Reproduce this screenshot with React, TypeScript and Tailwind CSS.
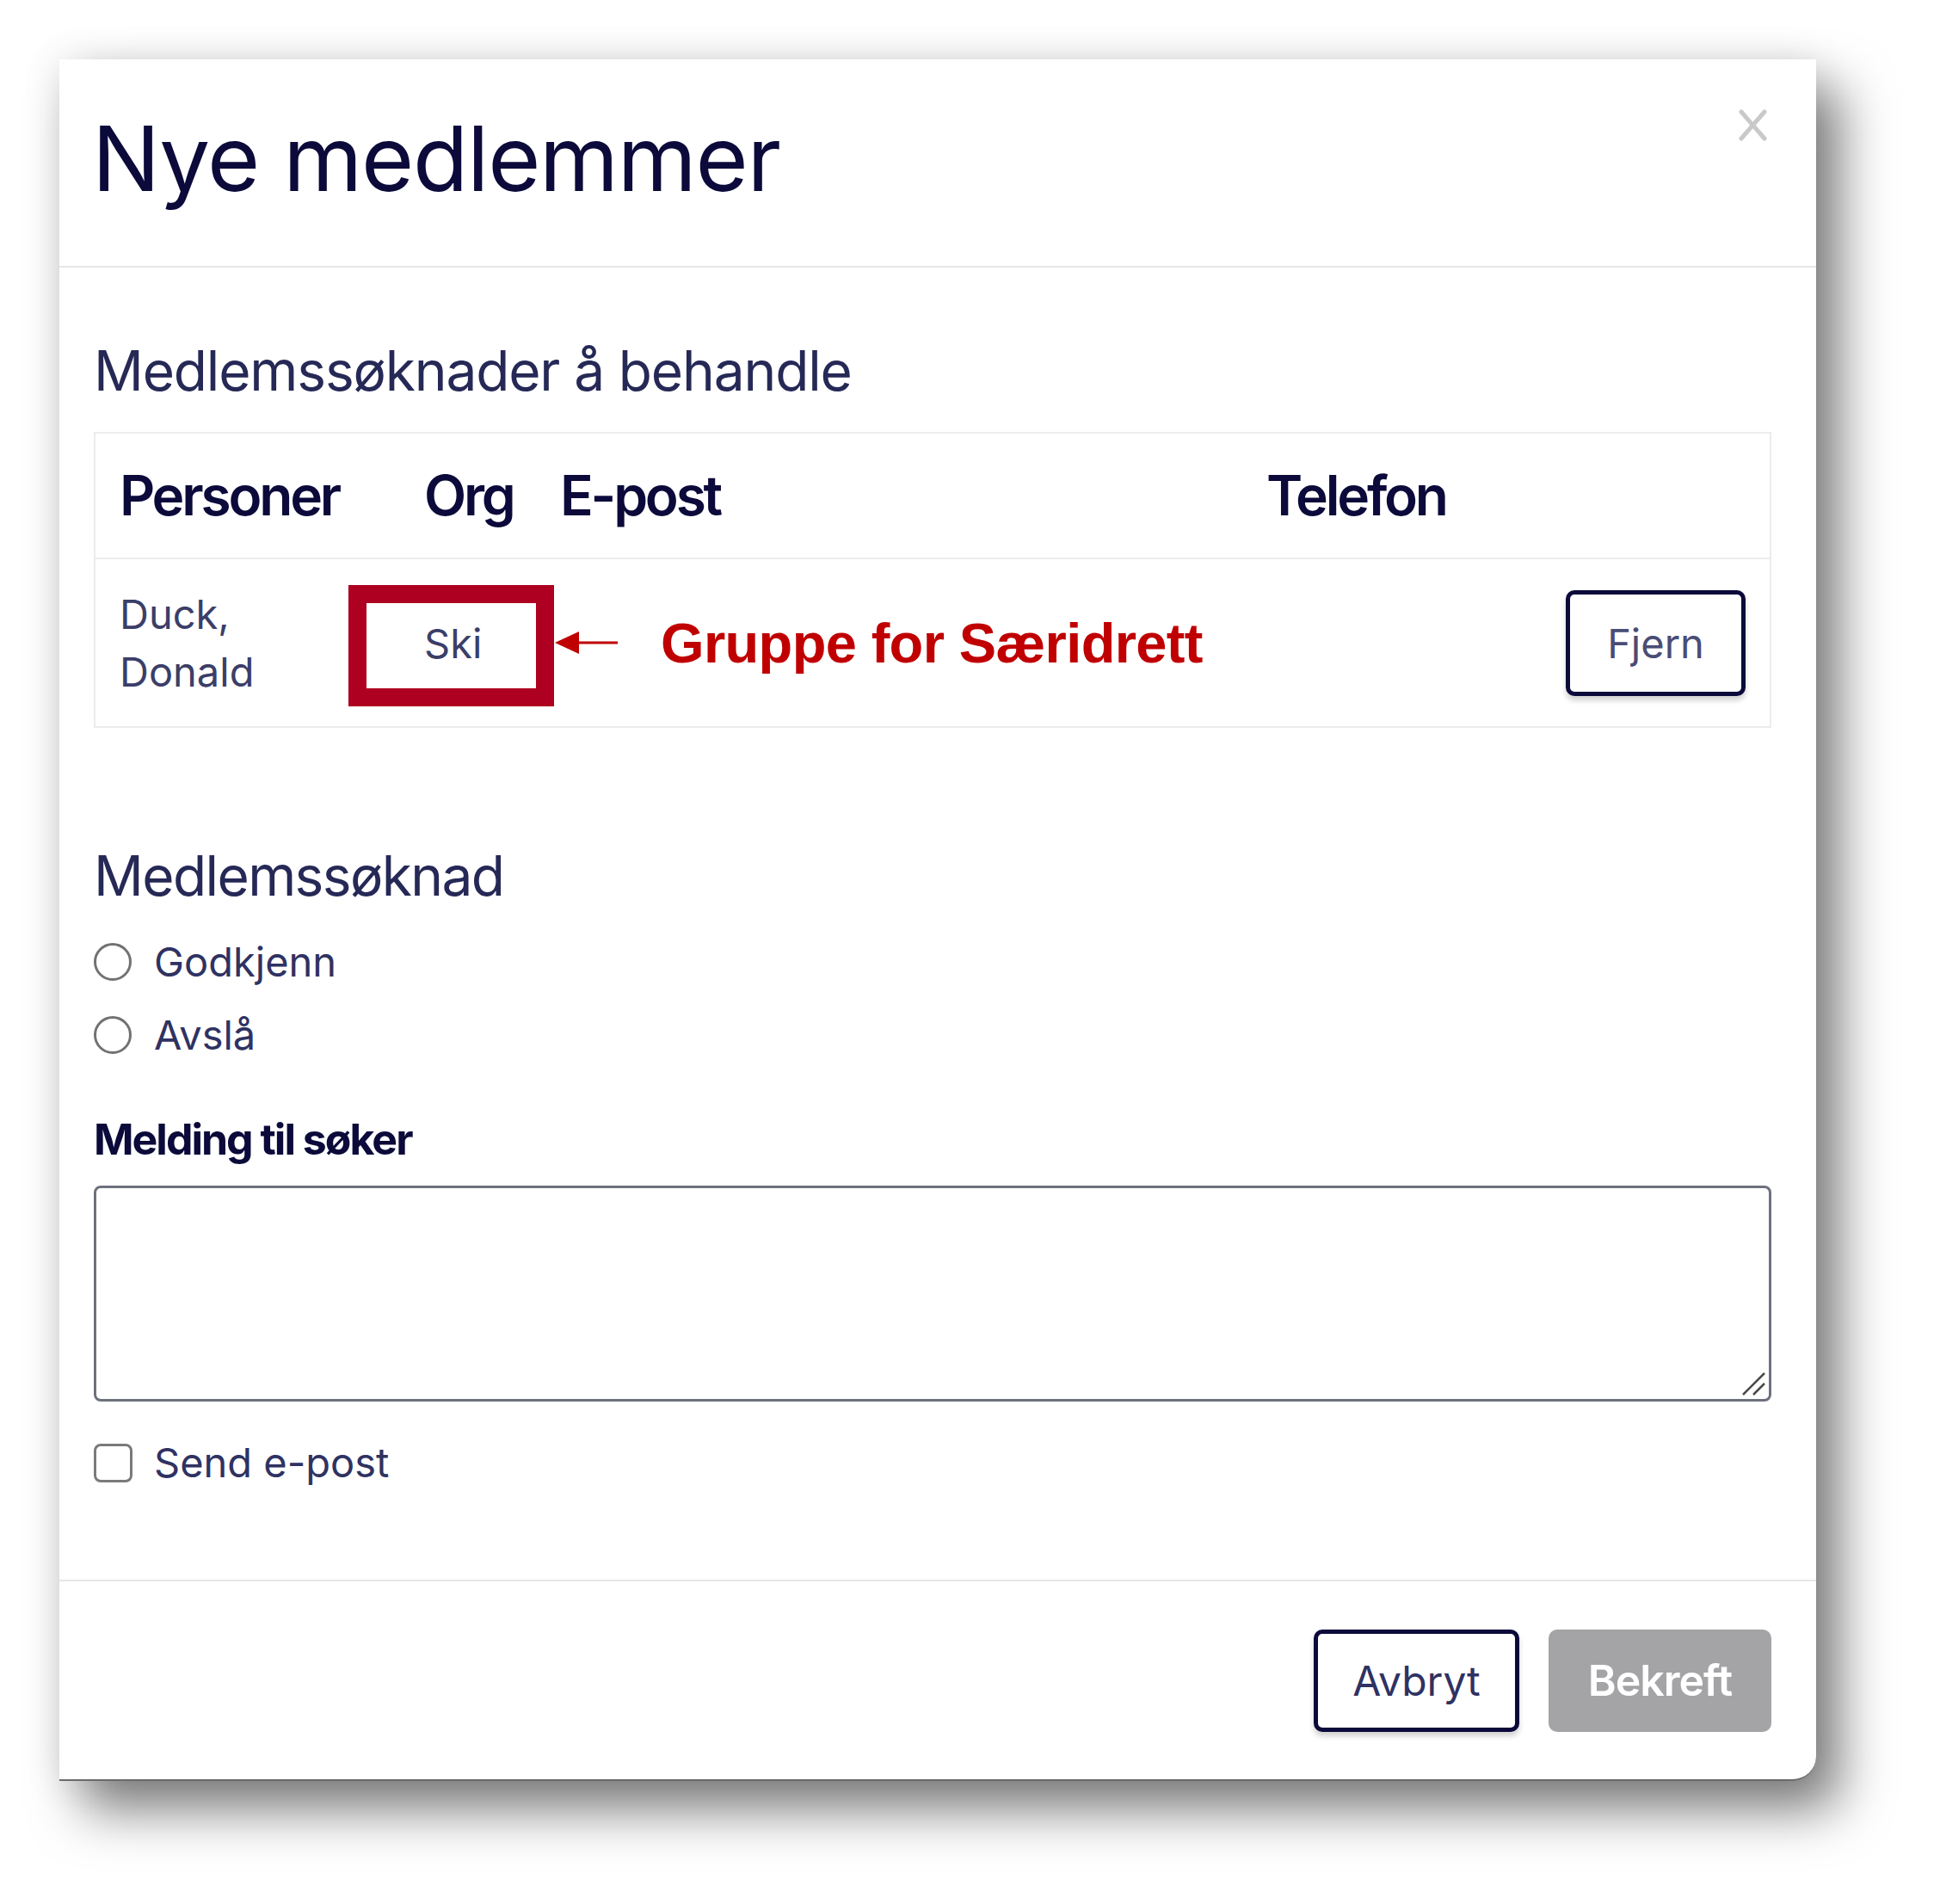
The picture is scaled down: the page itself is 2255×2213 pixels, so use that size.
const ui = { fontFamily: 'Inter, "Noto Sans", sans-serif' }

function CloseIcon() {
  return (
    <svg width="37" height="39" viewBox="0 0 37 39" fill="none">
      <path d="M5 4 L32 35 M32 4 L5 35" stroke="#c9c9c9" strokeWidth="5" strokeLinecap="round" />
    </svg>
  )
}

function Arrow() {
  return (
    <svg width="73" height="28" viewBox="0 0 73 28">
      <line x1="24" y1="14" x2="73" y2="14" stroke="#c00000" strokeWidth="3" />
      <polygon points="0,14 28,1 28,27" fill="#c00000" />
    </svg>
  )
}

function ResizeGrip() {
  return (
    <svg width="30" height="30" viewBox="0 0 30 30" fill="none">
      <path d="M3 28 L28 3 M15 28 L28 15" stroke="#4a4a4a" strokeWidth="2.5" />
    </svg>
  )
}

export default function App() {
  const cols = 'grid grid-cols-[354px_158px_821px_1fr]'

  return (
    <div className="min-h-screen w-full bg-white pl-[69px] pt-[69px]" style={ui}>
      <div className="w-[2042px] rounded-br-[28px] border-b-2 border-[#6a6a6a] bg-white shadow-[28px_34px_60px_rgba(0,0,0,0.5),0_0_45px_rgba(0,0,0,0.1)]">
        {/* header */}
        <div className="flex items-start justify-between border-b-2 border-[#e6e6e6] pb-[73px] pl-[38px] pr-[55px] pt-[62px]">
          <h1 className="text-[105px] font-normal leading-none tracking-[-0.012em] text-[#0b0a3a]">
            Nye medlemmer
          </h1>
          <button className="-mt-[5px]">
            <CloseIcon />
          </button>
        </div>

        {/* body */}
        <div className="pb-[111px] pl-[40px] pr-[52px] pt-[88px]">
          <h2 className="text-[64px] font-normal leading-none tracking-[-0.018em] text-[#262956]">
            Medlemssøknader å behandle
          </h2>

          <div className="mt-[39px] border-2 border-[#ececec]">
            <div className={`${cols} h-[146px] items-center border-b-2 border-[#ececec] text-[64px] font-semibold leading-none tracking-[-0.05em] text-[#0b0a3a]`}>
              <div className="px-[28px]">Personer</div>
              <div className="px-[28px]">Org</div>
              <div className="px-[28px]">E-post</div>
              <div className="px-[28px]">Telefon</div>
            </div>

            <div className={`${cols} relative h-[194px] items-center text-[47px] leading-[67px] text-[#3b3e68]`}>
              <div className="px-[28px]">
                Duck,
                <br />
                Donald
              </div>
              <div className="px-[28px]">Ski</div>
              <div />
              <div className="flex justify-end px-[28px]">
                <button className="h-[123px] w-[209px] rounded-[10px] border-[5px] border-[#0b0a3a] bg-white text-[47px] text-[#4a4d75] shadow-[0_5px_6px_rgba(0,0,0,0.18)]">
                  Fjern
                </button>
              </div>

              {/* annotation */}
              <div className="absolute left-[294px] top-[30px] h-[141px] w-[239px] border-[21px] border-[#ae0020]" />
              <div className="absolute bottom-0 left-[534px] top-0 flex items-center gap-[50px]">
                <Arrow />
                <span
                  className="text-[65px] font-bold leading-none tracking-[-0.01em] text-[#c00000]"
                  style={{ fontFamily: '"Liberation Sans", Arial, sans-serif' }}
                >
                  Gruppe for Særidrett
                </span>
              </div>
            </div>
          </div>

          <h2 className="mt-[140px] text-[64px] font-normal leading-none tracking-[-0.025em] text-[#262956]">
            Medlemssøknad
          </h2>

          <div className="mt-[38px] flex flex-col gap-[25px]">
            {['Godkjenn', 'Avslå'].map((label) => (
              <label key={label} className="flex h-[60px] items-center gap-[26px] text-[47px] text-[#2f3262]">
                <input
                  type="radio"
                  name="soknad"
                  className="h-[44px] w-[44px] appearance-none rounded-full border-[3px] border-[#727272] bg-white"
                />
                {label}
              </label>
            ))}
          </div>

          <div className="mt-[66px] text-[50px] font-bold leading-none tracking-[-0.04em] text-[#0b0a3a]">
            Melding til søker
          </div>
          <div className="relative mt-[29px]">
            <textarea className="block h-[251px] w-full resize-none rounded-[8px] border-[3px] border-[#6d717c] bg-white" />
            <span className="pointer-events-none absolute bottom-[6px] right-[6px]">
              <ResizeGrip />
            </span>
          </div>

          <label className="mt-[46px] flex h-[50px] items-center gap-[25px] text-[47px] text-[#2f3262]">
            <input
              type="checkbox"
              className="h-[45px] w-[45px] appearance-none rounded-[8px] border-[3px] border-[#7a7a7a] bg-white"
            />
            Send e-post
          </label>
        </div>

        {/* footer */}
        <div className="flex justify-end gap-[34px] border-t-2 border-[#e6e6e6] pb-[55px] pr-[52px] pt-[56px]">
          <button className="h-[119px] w-[239px] rounded-[10px] border-[5px] border-[#0b0a3a] bg-white text-[48px] font-normal text-[#2f3262] shadow-[0_5px_6px_rgba(0,0,0,0.18)]">
            Avbryt
          </button>
          <button className="h-[119px] w-[259px] rounded-[10px] bg-[#a4a4a7] text-[50px] font-semibold tracking-[-0.02em] text-white">
            Bekreft
          </button>
        </div>
      </div>
    </div>
  )
}
